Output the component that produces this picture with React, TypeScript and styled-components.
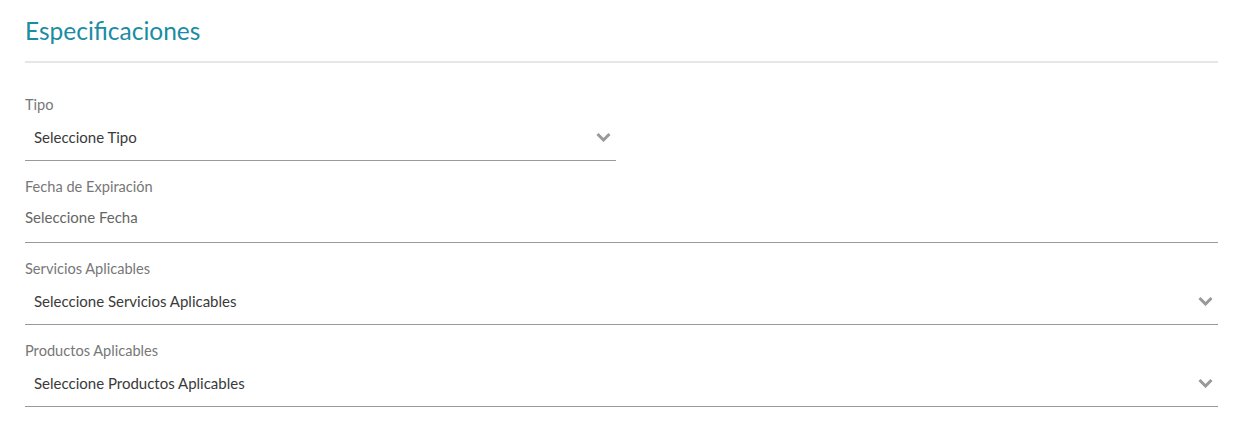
import React from "react";
import styled, { createGlobalStyle } from "styled-components";

const Global = createGlobalStyle`
  html, body { margin: 0; padding: 0; background: #fff; }
  body { font-family: "Lato", "Open Sans", sans-serif; }
`;

const Page = styled.div`
  padding: 15px 29px 0 25px;
  width: 1193px;
`;

const Title = styled.h2`
  margin: 0;
  font-size: 24.5px;
  font-weight: 400;
  color: #1a8ca3;
  line-height: 32px;
  padding-bottom: 14px;
  border-bottom: 2px solid #e6e6e6;
`;

const Form = styled.div`
  display: flex;
  flex-direction: column;
  padding-top: 33px;
`;

const Field = styled.div<{ $half?: boolean }>`
  display: flex;
  flex-direction: column;
  width: ${(p) => (p.$half ? "591px" : "100%")};
  margin-bottom: 17px;
`;

const Label = styled.label`
  font-size: 14.6px;
  line-height: 18px;
  color: #777;
  height: 18px;
`;

const SelectBox = styled.div`
  display: flex;
  align-items: center;
  justify-content: space-between;
  box-sizing: border-box;
  height: 47px;
  padding: 0 5px 0 9px;
  border-bottom: 1px solid #999;
  font-size: 15px;
  line-height: 18px;
  color: #3a3a3a;
`;

const DateBox = styled.div`
  box-sizing: border-box;
  height: 47px;
  padding-top: 12px;
  border-bottom: 1px solid #999;
  font-size: 15px;
  line-height: 18px;
  color: #666;
`;

const Chevron = () => (
  <svg width="15" height="10" viewBox="0 0 15 10">
    <path d="M1.5 2 L7.5 8 L13.5 2" fill="none" stroke="#999" strokeWidth="3" strokeLinejoin="miter" />
  </svg>
);

export default function App() {
  return (
    <>
      <Global />
      <Page>
        <Title>Especificaciones</Title>
        <Form>
          <Field $half>
            <Label>Tipo</Label>
            <SelectBox>
              <span>Seleccione Tipo</span>
              <Chevron />
            </SelectBox>
          </Field>
          <Field>
            <Label>Fecha de Expiración</Label>
            <DateBox>Seleccione Fecha</DateBox>
          </Field>
          <Field>
            <Label>Servicios Aplicables</Label>
            <SelectBox>
              <span>Seleccione Servicios Aplicables</span>
              <Chevron />
            </SelectBox>
          </Field>
          <Field>
            <Label>Productos Aplicables</Label>
            <SelectBox>
              <span>Seleccione Productos Aplicables</span>
              <Chevron />
            </SelectBox>
          </Field>
        </Form>
      </Page>
    </>
  );
}
